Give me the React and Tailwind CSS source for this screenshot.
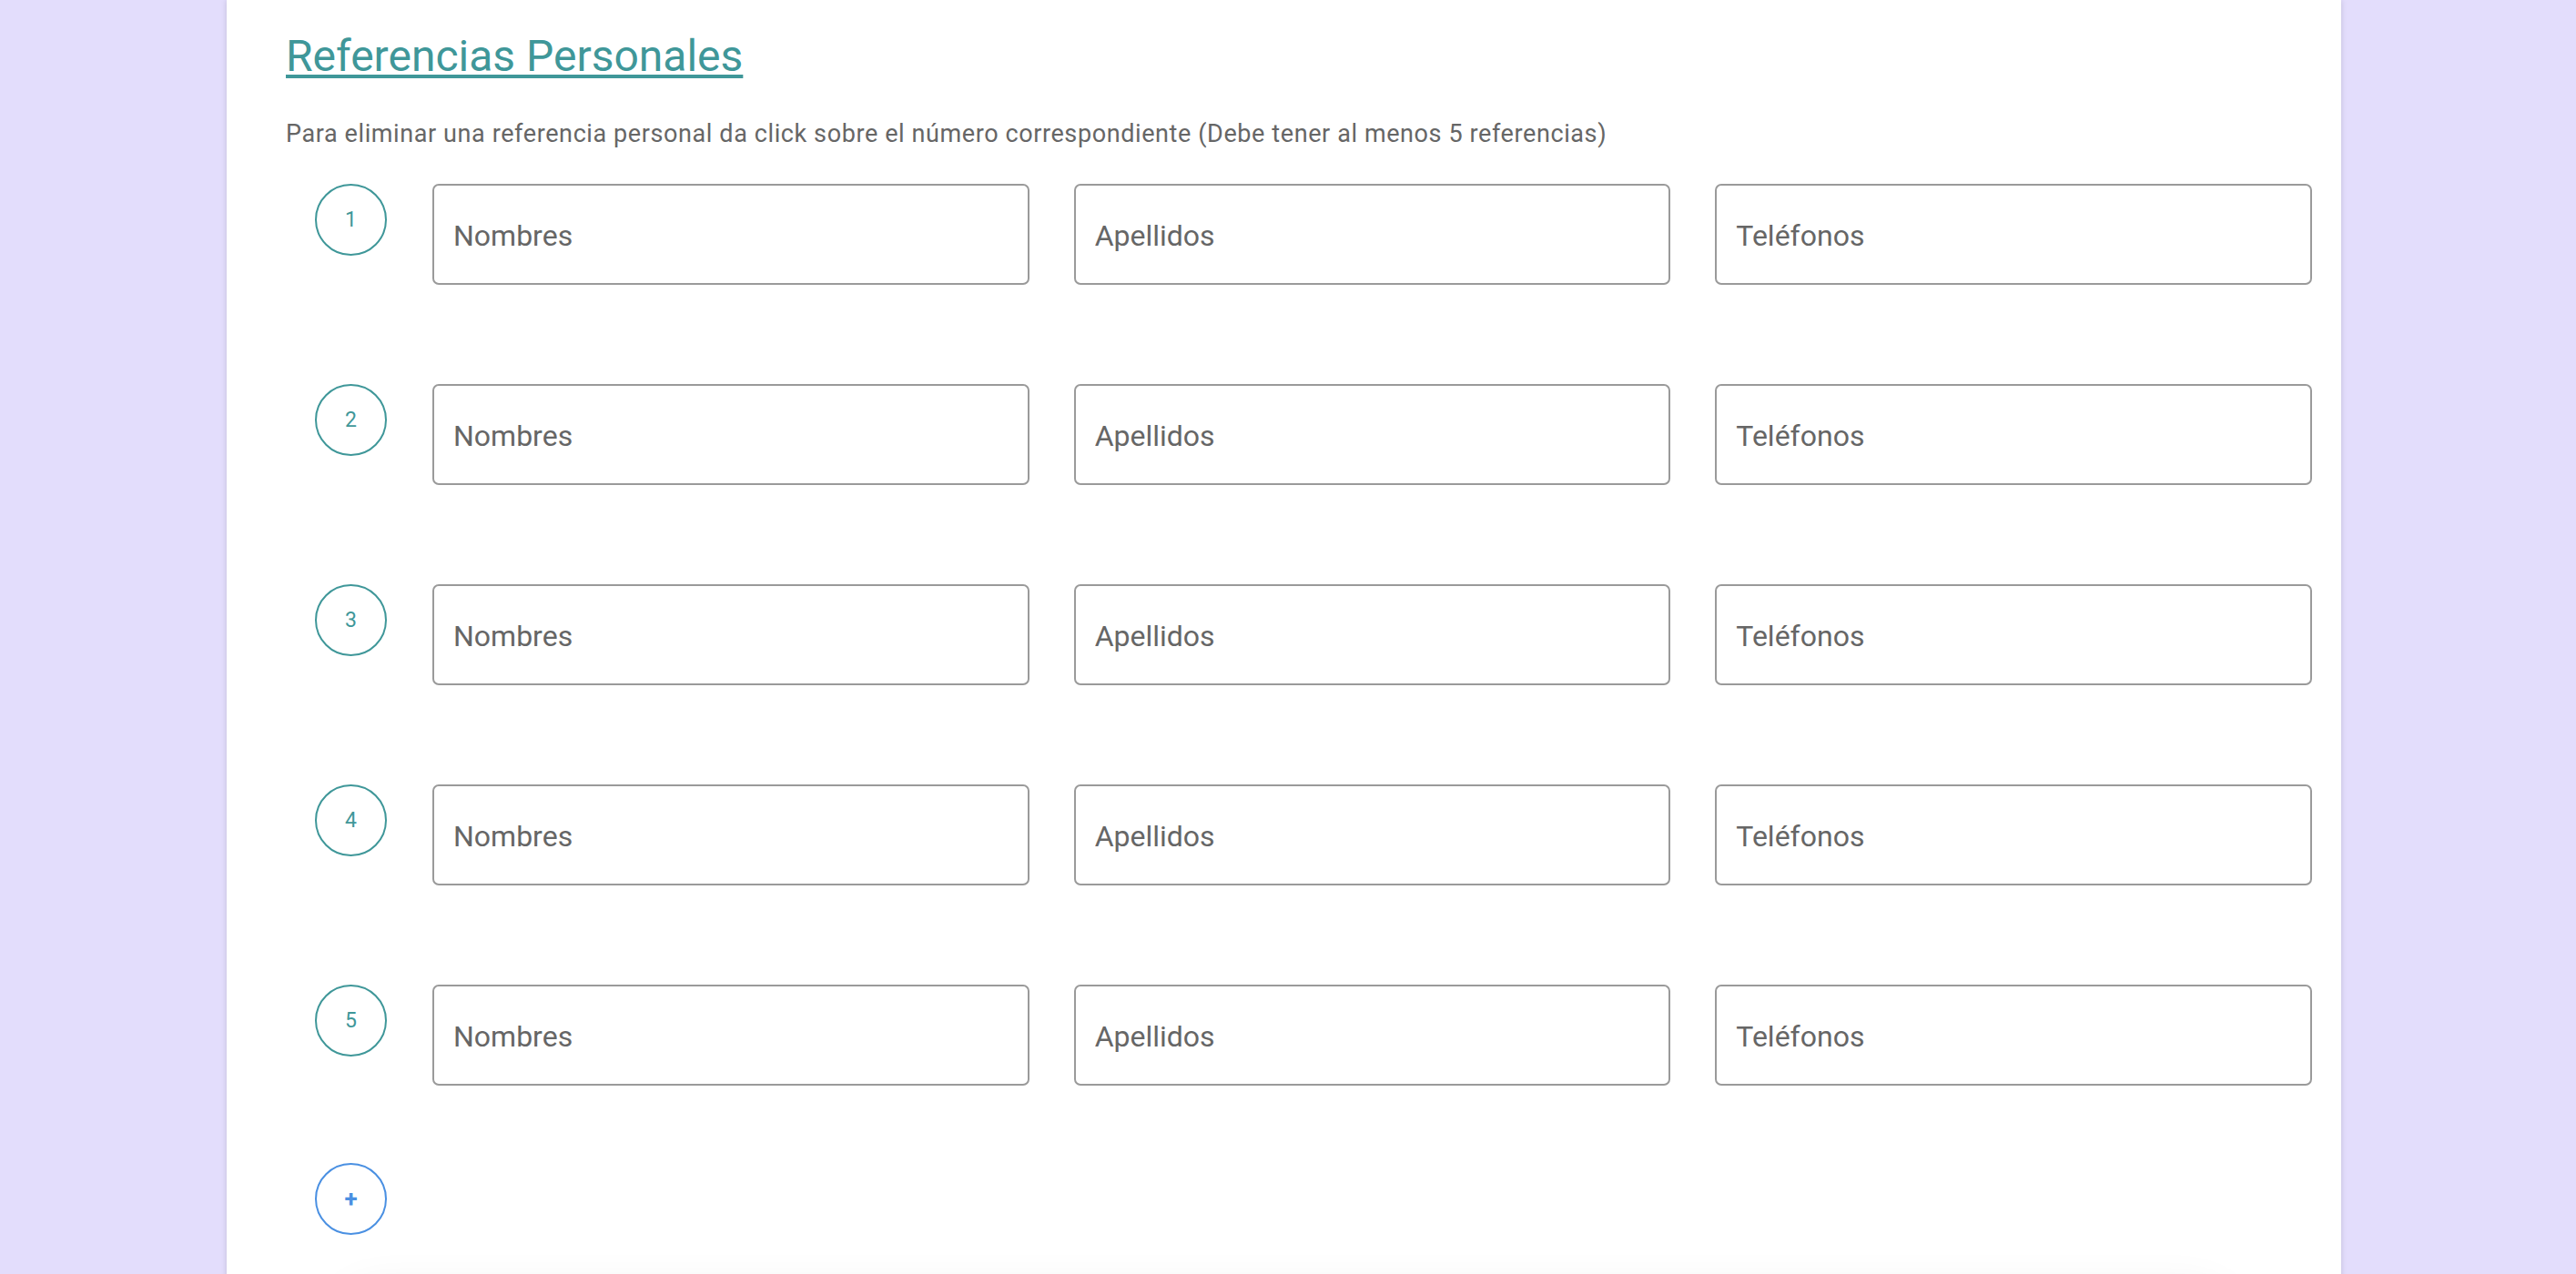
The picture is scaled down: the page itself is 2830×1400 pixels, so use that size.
import { useState } from "react";

const teal = "text-[#3f9799]";

function RefRow({ n, onRemove }) {
  return (
    <div className="flex items-start gap-[50px] pl-[32px]">
      <button
        type="button"
        onClick={onRemove}
        className="flex h-[79px] w-[79px] shrink-0 items-center justify-center rounded-full border-2 border-[#3f9799] bg-white pt-[2px] text-[23px] text-[#3f9799]"
      >
        {n}
      </button>
      <div className="grid flex-1 grid-cols-3 gap-x-[49px]">
        {["Nombres", "Apellidos", "Teléfonos"].map((p) => (
          <input
            key={p}
            placeholder={p}
            className="h-[111px] w-full rounded-[7px] border-2 border-[#9a9a9a] bg-white px-[21px] pt-[3px] text-[32px] text-[#555] outline-none placeholder:text-[#666]"
          />
        ))}
      </div>
    </div>
  );
}

export default function App() {
  const [rows, setRows] = useState([1, 2, 3, 4, 5]);

  const remove = (i) => {
    if (rows.length <= 5) return;
    setRows(rows.filter((_, k) => k !== i));
  };

  return (
    <div className="min-h-screen overflow-hidden bg-[#e3ddfc] font-['Roboto',sans-serif]">
      <div className="ml-[249px] min-h-[1400px] w-[2323px] bg-white pl-[65px] pr-[32px] pt-[34px] shadow-[0_0_6px_rgba(0,0,0,0.15)]">
        <h2 className={`text-[48px] leading-[56px] ${teal} underline decoration-[4px] underline-offset-[4px]`}>
          Referencias Personales
        </h2>
        <p className="mt-[42px] text-[27px] leading-[30px] tracking-[0.6px] text-[#666]">
          Para eliminar una referencia personal da click sobre el número correspondiente (Debe tener al menos 5 referencias)
        </p>

        <div className="mt-[40px] flex flex-col gap-[109px]">
          {rows.map((r, i) => (
            <RefRow key={r} n={i + 1} onRemove={() => remove(i)} />
          ))}
        </div>

        <div className="mt-[85px] pl-[32px]">
          <button
            type="button"
            onClick={() => setRows([...rows, Date.now()])}
            className="flex h-[79px] w-[79px] items-center justify-center rounded-full border-2 border-[#4a90e2] bg-white text-[26px] font-bold text-[#4a90e2]"
          >
            +
          </button>
        </div>

        {/* next section, only its shadow shows */}
        <div className="ml-[60px] mr-[90px] mt-[60px] h-[200px] rounded-[40px] bg-white shadow-[0_0_50px_rgba(0,0,0,0.07)]" />
      </div>
    </div>
  );
}
